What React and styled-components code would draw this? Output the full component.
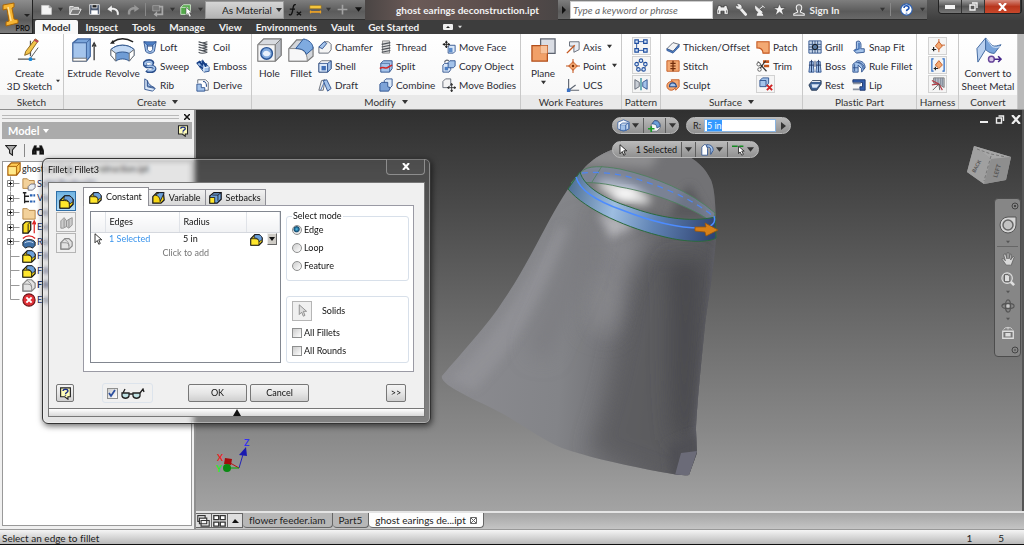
import React, { useEffect, useRef } from 'react'
import styled, { createGlobalStyle, css } from 'styled-components'

const GlobalStyle = createGlobalStyle`
  * {
    box-sizing: border-box;
  }
  body {
    margin: 0;
    font-family: Lato, 'Open Sans', sans-serif;
    font-size: 10px;
    line-height: 14px;
    font-variant-ligatures: none;
    color: #222;
    background: #111;
  }
  button,
  input,
  select {
    font: inherit;
    color: inherit;
    margin: 0;
  }
  svg {
    display: block;
    flex: none;
  }
`

/* ---------- icons ---------- */

const NAVY = '#2b4f8c'
const SKY = '#a4c3ea'
const PALE = '#dbe8f8'
const GREY = '#5d6470'
const RUST = '#c4571f'
const PEACH = '#f3a973'

const glyphs = {
  page: <path d="M2 3h9l3 3v8H2z M11 3v3h3" fill="#f4f4f4" stroke="#ccc" />,
  open: (
    <>
      <path d="M2 13V4h4l1 1h5v3" fill="#aaa" stroke="#eee" />
      <path d="M2 13l3-6h10l-3 6z" fill="#777" stroke="#f4f4f4" />
    </>
  ),
  save: (
    <>
      <path d="M2 2h12v12H2z" fill="#4a5870" stroke="#e8e8e8" />
      <path d="M5 2h6v4H5z" fill="#222" stroke="#eee" />
      <path d="M4 9h8v5H4z" fill="#fff" />
    </>
  ),
  undo: <path d="M1 7l6-5v3c5 0 8 3 8 7v2h-3v-2c0-3-2-4-5-4v3z" fill="#f0f0f0" stroke="#333" strokeWidth=".5" />,
  redo: <path d="M15 7L9 2v3c-5 0-8 3-8 7v2h3v-2c0-3 2-4 5-4v3z" fill="#979797" />,
  update: (
    <>
      <path d="M2 3h8v6H2z" fill="#777" stroke="#9b9b9b" />
      <path d="M9 4h4v9H6" fill="none" stroke="#a8a8a8" strokeWidth="2" />
      <path d="M3 13l4-4v7z" fill="#aaa" />
    </>
  ),
  pick: (
    <>
      <path d="M2 5l3-3h8v8l-3 3H2z" fill="#54a84b" stroke="#d8ecd5" />
      <path d="M2 5h8v8" fill="none" stroke="#cbe7c7" />
      <path d="M8 5v9l2-2 2 4 2-1-2-4h3z" fill="#fff" stroke="#444" strokeWidth=".6" />
    </>
  ),
  ruler: (
    <>
      <path d="M1 3h14v4H1z" fill="#f3c53d" stroke="#8a6514" strokeWidth=".6" />
      <path d="M1 11h14" stroke="#f5a623" strokeWidth="2" />
      <path d="M2 9v4M14 9v4" stroke="#f5a623" />
    </>
  ),
  plus: <path d="M8 2v12M2 8h12" stroke="#a2a2a2" strokeWidth="2" />,
  binoculars: (
    <path
      d="M3 3h3v2h4V3h3l2 6v5h-5v-4H6v4H1V9z M3 9v3 M13 9v3"
      fill="#eee"
      stroke="#222"
      strokeWidth=".7"
    />
  ),
  findTree: <path d="M3 2h3v3h4V2h3l3 7v5h-6v-5H6v5H0V9z M3 9v3M13 9v3" fill="#111" stroke="#555" strokeWidth=".6" />,
  key: (
    <>
      <path d="M6 6l7 8" stroke="#eee" strokeWidth="3.5" strokeLinecap="round" />
      <path d="M2 1c4-1 8 2 6 6-3 2-8 0-7-4l3 1z" fill="#eee" stroke="#333" strokeWidth=".5" />
    </>
  ),
  dish: (
    <path
      d="M2 3c0 6 4 9 9 8zM7 7l5-4M6 11l-2 4h8l-3-4M11 2l3 3"
      fill="#eee"
      stroke="#eee"
      strokeWidth="1.3"
    />
  ),
  star: <path d="M8 1l2 5h5l-4 3 2 6-5-4-5 4 2-6-4-3h5z" fill="#f5f5f5" stroke="#333" strokeWidth=".5" />,
  person: (
    <path d="M8 1c5 0 4 7 2 8v2l5 2v2H1v-2l5-2V9C4 8 3 1 8 1z" fill="#777" stroke="#f0f0f0" strokeWidth="1.4" />
  ),
  loft: (
    <>
      <path d="M1 2l4 1v5c0 2 6 2 6 0V3l4-1-2 11c-3 3-7 3-10 0z" fill={SKY} stroke={NAVY} />
      <path d="M1 2h14l-4 4H5z" fill="#4d7fc5" stroke={NAVY} strokeWidth=".8" />
      <path d="M5 7h6v4c-2 3-4 3-6 0z" fill="#fff" stroke={NAVY} />
    </>
  ),
  sweep: (
    <>
      <path d="M3 8c-3-3 0-6 4-6 3 0 5 2 3 4M3 8c3 2 8-1 10 2 2 4-6 6-9 3" fill="none" stroke={NAVY} strokeWidth="4" />
      <path d="M3 7c-2-3 1-4 4-4 3 0 4 2 2 3M4 8c3 1 7-1 9 2 1 3-5 4-8 3" fill="none" stroke={SKY} strokeWidth="2" />
    </>
  ),
  rib: (
    <>
      <path d="M2 1l3 2v7l9 2-3 3-9-2z" fill={PALE} stroke={NAVY} />
      <path d="M5 3c1 4 4 6 8 8l-8-2z" fill={SKY} stroke={NAVY} />
    </>
  ),
  coil: (
    <path
      d="M3 2c3 2 7 1 10 0M3 5c3 2 7 1 10 0M3 8c3 2 7 1 10 0M3 11c3 2 7 1 10 0M3 14c3 2 7 1 10 0M3 2l10 3M3 5l10 3M3 8l10 3M3 11l10 3"
      fill="none"
      stroke="#4d5258"
      strokeWidth="1.3"
    />
  ),
  emboss: (
    <>
      <path d="M1 5l6-3 8 7v5l-6 1z" fill={SKY} stroke={NAVY} />
      <path d="M1 5l3-2 3 4 1-4 3 5 1-3M4 8l4 3" stroke="#173f86" strokeWidth="2" fill="none" />
      <path d="M9 15v-5l6-1" fill="none" stroke="#fff" />
    </>
  ),
  derive: (
    <>
      <path d="M2 6V2h9l3 3v9h-4" fill="#fff" stroke={GREY} />
      <path d="M1 7h5v4h4v4H1z" fill={SKY} stroke={NAVY} />
      <path d="M8 4c4 0 4 3 4 6" fill="none" stroke={NAVY} strokeWidth="1.3" />
    </>
  ),
  chamfer: (
    <>
      <path d="M1 8l6-6h5l3 3v6l-3 4H1z" fill="#f4f4f4" stroke={GREY} />
      <path d="M1 8l6-6 3 2-5 6z" fill={SKY} stroke={NAVY} />
    </>
  ),
  shell: (
    <>
      <path d="M1 5l3-3h11v9l-4 4H1z" fill="#fff" stroke={GREY} />
      <path d="M1 5h10v10H1z" fill={PALE} stroke={NAVY} />
      <path d="M4 8h5v5H4z" fill="#3e6db5" />
      <path d="M11 5l4-3v9l-4 4z" fill={SKY} stroke={NAVY} />
    </>
  ),
  draft: (
    <>
      <path d="M1 14L4 3l4-1-2 12z" fill="#eee" stroke={GREY} />
      <path d="M6 3l4-1 5 10-4 3z" fill={SKY} stroke={NAVY} />
      <path d="M3 14L7 5" stroke="#3e6db5" />
    </>
  ),
  thread: (
    <>
      <path d="M4 1h8v14H4z" fill="#ddd" stroke="#888" />
      <path d="M3 5l10-2M3 8l10-2M3 11l10-2M3 14l10-2" stroke="#4d5258" strokeWidth="1.4" />
    </>
  ),
  split: (
    <>
      <path d="M2 5l3-3h10v9l-3 4H2z" fill={SKY} stroke={NAVY} />
      <path d="M2 5h10v10" fill="none" stroke={NAVY} strokeWidth=".7" />
      <path d="M1 11c4-4 6 2 10-2l4-2" fill="none" stroke="#d32727" strokeWidth="1.8" />
    </>
  ),
  combine: (
    <>
      <path d="M6 3l2-2h7v8l-2 2H6z" fill={PALE} stroke={NAVY} />
      <path d="M1 7l2-2h7v5l3 1-2 4H1z" fill="#7da3d8" stroke={NAVY} />
    </>
  ),
  moveFace: (
    <>
      <path d="M5 1v8M1 5h8M5 1L4 3h2zM5 9L4 7h2zM1 5l2-1v2zM9 5L7 4v2z" stroke="#222" fill="#222" />
      <path d="M7 8l2-2h6v7l-2 2H7z" fill={PALE} stroke={NAVY} />
      <path d="M8 9h4v5H8z" fill="#5c8ccc" />
    </>
  ),
  copyObject: (
    <>
      <path d="M1 7l2-2h7v7l-2 3H1z" fill={PALE} stroke={NAVY} />
      <path d="M7 4l2-2h6v6l-2 2H7z" fill={SKY} stroke={NAVY} />
      <path d="M3 4c0-3 3-3 5-2" fill="none" stroke={GREY} strokeWidth="1.4" />
      <path d="M3 9h4v4H3z" fill="#4d7fc5" />
    </>
  ),
  moveBodies: (
    <>
      <path d="M1 4l3-3h6v7l-3 3H1z" fill="#f4f4f4" stroke={GREY} />
      <path d="M11 7v8M7 11h8M11 6l-1 2h2zM11 16l-1-2h2zM6 11l2-1v2zM16 11l-2-1v2z" stroke="#333" fill="#333" />
    </>
  ),
  axis: (
    <>
      <path d="M4 2h11v9L9 14V7H4z" fill="#e8ecf2" stroke={GREY} />
      <path d="M1 15L10 6" stroke={RUST} strokeWidth="1.6" />
    </>
  ),
  point: (
    <>
      <path d="M8 3l5 5-5 5-5-5z" fill={PEACH} stroke={RUST} />
      <path d="M8 0v5M8 11v5M0 8h5M11 8h5" stroke={RUST} strokeWidth="1.2" />
      <circle cx="8" cy="8" r="1.4" fill="#7a2e08" />
    </>
  ),
  ucs: (
    <>
      <path d="M3 1v13h12M3 14l8-6" fill="none" stroke={GREY} strokeWidth="1.3" />
      <path d="M1 12h4v4H1z" fill="#3b71c4" />
    </>
  ),
  rect: (
    <>
      <path d="M5 3h6M5 13h6M3 5v6" fill="none" stroke="#1e4d9f" />
      <path d="M1 1h4v4H1zM11 1h4v4h-4zM1 11h4v4H1zM11 11h4v4h-4z" fill={PALE} stroke="#1e4d9f" strokeWidth="1.3" />
    </>
  ),
  circ: (
    <g fill={PALE} stroke="#1e4d9f" strokeWidth="1.2">
      <circle cx="8" cy="9" r="5" fill="none" stroke="#888" />
      <circle cx="8" cy="3" r="2" />
      <circle cx="13" cy="7" r="2" />
      <circle cx="11" cy="13" r="2" />
      <circle cx="5" cy="13" r="2" />
      <circle cx="3" cy="7" r="2" />
    </g>
  ),
  mirror: (
    <>
      <path d="M1 3l5 3v5l-5 3z" fill="#c9ced6" stroke={GREY} />
      <path d="M15 3l-5 3v5l5 3z" fill={SKY} stroke={NAVY} />
      <path d="M8 1v14" stroke="#2d8f9b" strokeWidth="1.5" />
    </>
  ),
  thicken: (
    <>
      <path d="M1 10l7-7 7 2-7 8z" fill="#f4f4f4" stroke={GREY} />
      <path d="M1 10l7 3 7-8v3l-7 7-7-3z" fill="#4d7fc5" stroke={NAVY} strokeWidth=".8" />
    </>
  ),
  stitch: (
    <>
      <path d="M1 2h14v12H1z" fill={PEACH} stroke={RUST} />
      <path d="M8 2v12M5 5h6M5 8h6M5 11h6" stroke="#702b0b" strokeWidth="1.4" />
    </>
  ),
  sculpt: (
    <>
      <path d="M6 2h9v8l-4 4z" fill={PEACH} stroke={RUST} />
      <circle cx="6" cy="9" r="5" fill={PEACH} stroke={RUST} />
      <path d="M4 10c0-6 7-6 8 0z" fill={SKY} stroke={NAVY} strokeWidth="1.3" />
    </>
  ),
  patch: <path d="M1 2h14v13H8c0-4-2-6-7-6z" fill={PEACH} stroke={RUST} strokeWidth="1.2" />,
  trim: (
    <>
      <path d="M8 3h7M9 8h6" stroke={RUST} strokeWidth="3" />
      <path d="M2 3l10 11M3 13L11 2" stroke="#333" strokeWidth="1.4" />
      <circle cx="3" cy="6" r="2" fill="#fff" stroke="#555" />
      <circle cx="4" cy="12" r="2" fill="#fff" stroke="#555" />
    </>
  ),
  deleteFace: (
    <>
      <path d="M1 4l3-3h7v6l-3 4H1z" fill={SKY} stroke={NAVY} />
      <path d="M1 4h7v7" fill="none" stroke={NAVY} />
      <path d="M9 9l6 6M15 9l-6 6" stroke="#cf2222" strokeWidth="2.2" />
    </>
  ),
  grill: (
    <>
      <path d="M1 1h14v14H1z" fill="#c9d7ea" stroke={NAVY} />
      <path d="M1 5h14M1 8h14M1 11h14M5 1v14M8 1v14M11 1v14" stroke="#33517f" />
      <circle cx="8" cy="8" r="3" fill="#58789f" stroke="#111" />
    </>
  ),
  boss: (
    <>
      <path d="M2 3h4v4l1 8H1l1-8zM10 3h4v4l1 8H9l1-8z" fill={SKY} stroke={NAVY} />
      <path d="M1 7h6M9 7h6M4 1v14M12 1v14M8 2v7" stroke="#1e345f" />
    </>
  ),
  rest: (
    <>
      <path d="M1 8l4-5h10v4l-5 7H4z" fill="#3e6397" stroke="#24364f" />
      <path d="M4 7h9l-3 4H5z" fill={PALE} />
      <path d="M4 4h10" stroke="#fff" />
    </>
  ),
  snapFit: (
    <>
      <path d="M5 2c5-3 6 3 5 8h4v4l-9 1-3-3 3-2V7z" fill={SKY} stroke={NAVY} />
      <path d="M8 3v7l-5 2" fill="none" stroke="#3868af" strokeWidth="1.5" />
    </>
  ),
  ruleFillet: (
    <>
      <path d="M1 6l5-4c6 0 9 3 9 8l-4 5V11L7 7v8H1z" fill={SKY} stroke={NAVY} />
      <path d="M3 6v8M7 4c4 0 7 3 7 7M5 4c5 0 7 3 8 8M1 10h6" stroke={NAVY} fill="none" />
    </>
  ),
  lip: (
    <>
      <path d="M1 2h14v12H9v-4h3V5H1z" fill="#3560ad" stroke="#173066" />
      <path d="M1 6h9M1 13h7" stroke="#8b93a1" strokeWidth="2" />
    </>
  ),
  pin: (
    <>
      <path d="M9 3l4 5-4 4-4-4z" fill={PEACH} stroke={RUST} />
      <path d="M9 0v4M9 11v4M12 7h4" stroke={RUST} />
      <path d="M1 12h5M3 9v5" stroke="#222" strokeWidth="1.4" />
    </>
  ),
  pins: (
    <>
      <path d="M3 1H1v14h2M13 1h2v14h-2" fill="none" stroke="#2b6bc4" strokeWidth="1.4" />
      <path d="M9 3l4 5-4 4-4-4z" fill={PEACH} stroke={RUST} />
      <path d="M3 12h5M5 10v4" stroke="#222" strokeWidth="1.3" />
    </>
  ),
  harness: (
    <>
      <path d="M3 1h12v11l-5-3-7-2z" fill="#b8bec8" stroke="#777" />
      <path d="M5 1v6M8 1v7M11 1v8M13 1v9" stroke="#7b8594" />
      <path d="M1 4l8 4 4 7M9 8L1 9" stroke="#b23b45" strokeWidth="1.3" fill="none" />
      <path d="M2 15L9 8l1 7" stroke="#555" fill="none" />
    </>
  ),
  help: (
    <>
      <circle cx="8" cy="8" r="7" fill="#fff" stroke="#2d5fae" strokeWidth="1.4" />
      <path d="M5 6c0-4 6-3 6 0 0 2-3 2-3 4M8 12v1" fill="none" stroke="#1f55b4" strokeWidth="2" />
    </>
  ),
  helpBox: (
    <>
      <path d="M2 1h12v11h-3v3l-4-3H2z" fill="#fffdb8" stroke="#222" strokeWidth="1.4" />
      <path d="M5 5c0-3 6-3 6 0 0 2-3 1-3 4M8 10v1" fill="none" stroke="#1a2d86" strokeWidth="1.7" />
    </>
  ),
  funnel: <path d="M1 2h14l-5 6v7l-4-3V8z" fill="#aaa" stroke="#222" strokeWidth="1.4" />,
  part: (
    <>
      <path d="M1 5l4-4h10v9l-4 5H1z" fill="#fc5" stroke="#a35b05" strokeWidth="1.3" />
      <path d="M1 5h10v10M11 5l4-4" fill="none" stroke="#a35b05" />
      <path d="M2 6h8v8H2z" fill="#ffe98b" />
    </>
  ),
  folder: <path d="M1 3h5l2 2h7v10H1z" fill="#f3d19a" stroke="#b07f3c" />,
  solids: (
    <>
      <path d="M1 2h5l2 2h6v9H1z" fill="#f3d19a" stroke="#b07f3c" />
      <path d="M7 11l3-3h5v4l-3 3H7z" fill="#e9edf3" stroke="#667" />
    </>
  ),
  views: (
    <>
      <path d="M3 2v12M3 6h5M3 12h5M1 2h4" stroke="#222" strokeWidth="1.5" />
      <path d="M9 5h6M9 12h6" stroke="#2b63b4" strokeWidth="2.5" strokeDasharray="3 1" />
    </>
  ),
  extrudeTree: (
    <>
      <path d="M1 5l3-3h6v9l-3 4H1z" fill="#f9dc26" stroke="#111" strokeWidth="1.4" />
      <path d="M7 5v10M7 5l3-3" stroke="#111" />
      <path d="M14 3v12M12 5l2-4 2 4" stroke="#d22" fill="none" strokeWidth="1.4" />
    </>
  ),
  revolveTree: (
    <>
      <path d="M1 8c3-4 11-4 14 0v4l-3 3c-2-2-6-2-8 0l-3-3z" fill="#3e6fa5" stroke="#111" />
      <path d="M3 9c3-2 7-2 10 0" stroke={PALE} fill="none" />
      <path d="M1 4c4-4 10-4 14 0" stroke="#d22" strokeWidth="1.6" fill="none" />
    </>
  ),
  fillet: (
    <>
      <path d="M1 7l5-5h5l4 4v5l-4 4H1z" fill="#f7d715" stroke="#15151a" strokeWidth="1.4" />
      <path d="M6 2h5c3 1 4 3 4 6l-4 3c0-4-3-5-6-5z" fill="#6ca0d9" stroke="#15151a" strokeWidth=".8" />
      <path d="M1 7h5c3 0 5 1 5 4v4H1z" fill="#ffe62b" stroke="#15151a" />
    </>
  ),
  variable: (
    <>
      <path d="M1 7l5-5h8l1 9-4 4H1z" fill="#f7d715" stroke="#15151a" strokeWidth="1.5" />
      <path d="M4 5l5-3h6l-5 11c0-5-2-7-6-8z" fill="#6ca0d9" stroke="#15151a" />
    </>
  ),
  setbacks: (
    <>
      <path d="M1 6l5-4h9v8l-5 5H1z" fill="#6ca0d9" stroke="#15151a" strokeWidth="1.5" />
      <path d="M1 8h6v7H1z" fill="#ffe62b" stroke="#15151a" />
      <path d="M4 5h7v7M11 5l4-3" fill="none" stroke="#15151a" />
    </>
  ),
  filletGrey: (
    <>
      <path d="M1 7l5-5h5l4 4v5l-4 4H1z" fill="#e2e2e2" stroke="#888" strokeWidth="1.4" />
      <path d="M1 7h5c3 0 5 1 5 4v4H1zM6 2c-1 2 5 2 5 9" fill="none" stroke="#888" />
    </>
  ),
  faceGrey: (
    <>
      <path d="M1 6l4-4 3 4 3-2 4-2v9l-4 4-3-2-4 2H1z" fill="#ccc" stroke="#888" />
      <path d="M5 4v10M8 6v7M11 4v10" stroke="#888" />
    </>
  ),
  end: (
    <>
      <circle cx="8" cy="8" r="7" fill="#e02f35" stroke="#6b1115" strokeWidth="1.2" />
      <path d="M5 5l6 6M11 5l-6 6" stroke="#fff" strokeWidth="2.4" />
    </>
  ),
  cursor: <path d="M4 1v12l3-3 2 5 2-1-2-5h4z" fill="#fff" stroke="#111" strokeWidth="1.1" />,
  cursorGrey: <path d="M4 1v12l3-3 2 5 2-1-2-5h4z" fill="#ddd" stroke="#888" strokeWidth="1.1" />,
  bodyMini: (
    <>
      <path d="M1 4l7-3 7 3v8l-7 3-7-3z" fill="#f8fbff" stroke="#315b9e" />
      <path d="M4 7h7v7H4z" fill={SKY} stroke="#315b9e" />
      <path d="M4 7l3-2h7l-3 2M11 7v7l3-2V5" fill={PALE} stroke="#315b9e" />
    </>
  ),
  addMini: (
    <>
      <path d="M4 7l4-5h4l3 4v5l-4 4H4z" fill="#f5f5f5" stroke={GREY} />
      <path d="M8 2c5 0 6 3 7 7l-4 2c0-4-2-5-6-5z" fill="#6ca0d9" stroke={NAVY} />
      <path d="M4 9v7M0 12h8" stroke="#1a9a27" strokeWidth="2" />
    </>
  ),
  edgesMini: (
    <>
      <path d="M1 5l3-3c3 0 4 2 4 5v8H1z" fill="#fff" stroke={NAVY} />
      <path d="M7 2c6 0 8 3 8 7l-3 5V9c0-3-1-4-5-4z" fill={SKY} stroke={NAVY} />
    </>
  ),
  lineMini: (
    <>
      <path d="M0 4h14" stroke="#148a22" strokeWidth="2" strokeDasharray="7 2" />
      <path d="M8 4v9l2-2 2 4 2-1-2-4h3z" fill="#fff" stroke="#222" />
    </>
  ),
  cascade: (
    <>
      <path d="M1 2h9v7H1z" fill="#fff" stroke="#333" strokeWidth="1.4" />
      <path d="M3 5h9v7H3zM5 8h10v7H5z" fill="#f4f4f4" stroke="#333" strokeWidth="1.4" />
    </>
  ),
  tile: <path d="M1 2h6v5H1zM9 2h6v5H9zM1 10h6v5H1zM9 10h6v5H9z" fill="#fff" stroke="#333" strokeWidth="1.6" />,
}

const Icon = ({ name, size = 14 }) => (
  <svg width={size} height={size} viewBox="0 0 16 16" aria-hidden="true">
    {glyphs[name]}
  </svg>
)

const Caret = ({ color = '#333', size = 6 }) => (
  <svg width={size} height={size} viewBox="0 0 6 6" aria-hidden="true">
    <path d="M0 1h6L3 5z" fill={color} />
  </svg>
)

const bigGlyphs = {
  sketch: (
    <>
      <path d="M2 23h18M15 4v16" stroke="#555" strokeWidth="1.3" />
      <path d="M15 22l8-11" stroke="#555" />
      <path d="M10 15L20 2l3 2-9 13-5 2z" fill="#f2c44a" stroke="#8a641c" />
      <path d="M19 3l4 2" stroke="#b45" strokeWidth="2" />
      <circle cx="15" cy="23" r="2" fill="#1686d9" />
    </>
  ),
  extrude: (
    <>
      <path d="M2 6l5-4h13v18l-4 5H2z" fill="#79a4da" stroke="#3c629c" strokeWidth="1.2" />
      <path d="M2 6h14v17H2z" fill="#a5c5ec" stroke="#3c629c" />
      <path d="M16 6l4-4" stroke="#3c629c" />
      <path d="M2 22h14v3H2z" fill="#fff" stroke="#777" />
      <path d="M24 24V8M22 10l2-4 2 4" stroke="#333" fill="none" strokeWidth="1.3" />
    </>
  ),
  revolve: (
    <>
      <path d="M4 5c6-4 14-4 21 0" stroke="#222" fill="none" strokeWidth="1.5" />
      <path d="M1 7l3-4 2 4z" fill="#222" />
      <path d="M2 13c6-6 18-6 24 0v6l-5 6c-4-3-10-3-14 0l-5-6z" fill="#6f9cd5" stroke="#31568d" />
      <path d="M2 13c6-6 18-6 24 0l-5 4c-4-2-10-2-14 0z" fill="#c3d9f4" stroke="#31568d" />
      <path d="M2 13l5 4v8l-5-6zM26 13l-5 4v8l5-6z" fill="#fff" stroke="#777" />
    </>
  ),
  hole: (
    <>
      <path d="M2 8l6-6h18v17l-6 6H2z" fill="#d8dbe0" stroke="#777" strokeWidth="1.2" />
      <path d="M2 8h18v17H2z" fill="#f5f5f6" stroke="#888" />
      <path d="M20 8l6-6v17l-6 6z" fill="#babfc8" stroke="#777" />
      <circle cx="11" cy="17" r="6" fill="#84acdf" stroke="#2a5596" strokeWidth="1.5" />
      <path d="M7 17c1 4 7 4 8 0-2-3-6-4-8 0z" fill="#eaf2fc" />
    </>
  ),
  fillet: (
    <>
      <path d="M1 12l8-9h8l9 8v9l-6 5H1z" fill="#d3d6db" stroke="#777" strokeWidth="1.2" />
      <path d="M1 12h7c7 0 12 3 12 13H1z" fill="#f7f7f8" stroke="#888" />
      <path d="M8 12l8-10c6 1 10 5 10 10l-7 6c-1-4-5-6-11-6z" fill="#7fabe0" stroke="#2a5596" />
    </>
  ),
  plane: (
    <>
      <path d="M11 2h15v15H11z" fill="#dadde4" stroke="#5d6470" strokeWidth="1.3" />
      <path d="M2 9h16v16H2z" fill="#ee8f4e" fillOpacity=".85" stroke="#b24d19" strokeWidth="1.3" />
      <path d="M11 9h7v8h-7z" fill="#f7c29b" />
    </>
  ),
  convert: (
    <>
      <path d="M2 12l9-11v12L3 26z" fill="#b9d0ef" stroke="#41689f" />
      <path d="M11 1l7 8c3 1 5 0 9-1l-7 9c-3 0-6-1-9-4z" fill="#79a4da" stroke="#41689f" />
      <path d="M12 2l6 8c3 1 5 1 8 0" fill="none" stroke="#dbe8f8" />
      <circle cx="17" cy="23" r="3" fill="#d7c6e8" stroke="#67459a" strokeWidth="1.5" />
      <path d="M20 23h6M24 20l3 3-3 3" stroke="#45268a" strokeWidth="1.6" fill="none" />
    </>
  ),
}

/* ---------- title bar + tabs ---------- */

const Page = styled.div`
  height: 100vh;
  min-height: 480px;
  display: flex;
  flex-direction: column;
  border-bottom: 1px solid #111;
  overflow: hidden;
`

const Header = styled.header`
  flex: none;
  display: grid;
  grid-template: 20px 14px / 33px 1fr;
  background: #3d3d3d;
`

const AppButton = styled.button`
  grid-row: 1 / 3;
  position: relative;
  display: flex;
  padding: 2px 0 0 2px;
  border: 1px solid #222;
  border-width: 0 1px 1px 0;
  background: linear-gradient(#8d8d8d, #5a5a5a 60%, #7d7d7d);
`

const AppLabel = styled.span`
  position: absolute;
  right: 2px;
  bottom: 0;
  font-size: 7px;
  line-height: 9px;
  font-weight: 700;
  color: #111;
`

const TitleBar = styled.div`
  display: flex;
  min-width: 0;
  background: linear-gradient(#5a5a5a, #3f3f3f);
`

const Strip = styled.div`
  display: flex;
  align-items: center;
  border-bottom: 1px solid #2e2e2e;
  background: linear-gradient(#7e7e7e, #5b5b5b 60%, #686868);
  padding-left: ${p => p.$pad || 0}px;
`

const Tool = styled.button`
  flex: none;
  display: flex;
  align-items: center;
  justify-content: center;
  width: ${p => p.$w}px;
  height: 18px;
  padding: 0;
  border: 0;
  font-weight: ${p => (p.$bold ? 700 : 400)};
  background: none;
  color: #eee;
`

const Gap = styled.span`
  width: ${p => p.$w}px;
`

const Divider = styled.i`
  width: 1px;
  height: 13px;
  margin: 0 ${p => p.$gap || 2}px;
  background: #888;
`

const Material = styled.label`
  position: relative;
  display: flex;
  align-items: center;

  select {
    appearance: none;
    width: 79px;
    height: 18px;
    padding: 0 10px 0 16px;
    border: 1px solid #999;
    border-radius: 0;
    background: linear-gradient(#d5d5d5, #b3b3b3);
    color: #222;
  }
  svg {
    position: absolute;
    right: 2px;
    pointer-events: none;
  }
`

const FileTitle = styled.h1`
  flex: 1 1 100px;
  display: flex;
  align-items: center;
  justify-content: center;
  min-width: 150px;
  margin: 0;
  padding-left: 12px;
  font-size: 10px;
  font-weight: 700;
  white-space: nowrap;
  color: #f2f2f2;
  background: linear-gradient(90deg, #4a4544, #6b5a57 25%, #574b49 75%, #4a4646);
`

const Search = styled.input`
  width: 143px;
  height: 18px;
  margin-top: 1px;
  padding: 0 2px;
  border: 1px solid #ccc;
  background: #fff;
  font-style: italic;

  &::placeholder {
    color: #666;
  }
`

const WindowButtons = styled.div`
  flex: none;
  display: flex;
  height: 14px;
  margin: 0 2px 0 11px;
  border: 1px solid #222;
  border-top: 0;
  border-radius: 0 0 4px 4px;
  overflow: hidden;
`

const WindowButton = styled.button`
  display: flex;
  align-items: center;
  justify-content: center;
  width: ${p => (p.$close ? 36 : 23)}px;
  padding: 0;
  border: 0;
  border-right: 1px solid #333;
  background: ${p =>
    p.$close
      ? 'linear-gradient(#d58a7c, #b8361d 50%, #c9482b)'
      : 'linear-gradient(#9b9b9b, #555 50%, #777)'};
`

const Tabs = styled.nav`
  display: flex;
  padding-left: 2px;
  background: #3d3d3d;
`

const Tab = styled.button`
  padding: 0 7px;
  border: 0;
  font-weight: 700;
  line-height: 13px;
  white-space: nowrap;
  background: none;
  color: #f2f2f2;

  ${p =>
    p.$active &&
    css`
      margin-right: 1px;
      border-radius: 2px 2px 0 0;
      background: #f9f9f9;
      color: #333;
    `}
`

const RibbonToggle = styled.button`
  display: flex;
  align-items: center;
  gap: 5px;
  margin-left: 17px;
  padding: 0;
  border: 0;
  background: none;
`

function TitleTools() {
  return (
    <TitleBar>
      <Strip $pad={4}>
        <Tool $w={18} aria-label="New"><Icon name="page" size={13} /></Tool>
        <Tool $w={10} aria-label="New options"><Caret color="#333" size={5} /></Tool>
        <Tool $w={20} aria-label="Open"><Icon name="open" /></Tool>
        <Tool $w={18} aria-label="Save"><Icon name="save" size={13} /></Tool>
        <Tool $w={20} aria-label="Undo"><Icon name="undo" /></Tool>
        <Tool $w={20} aria-label="Redo"><Icon name="redo" size={13} /></Tool>
        <Divider />
        <Tool $w={19} aria-label="Update"><Icon name="update" /></Tool>
        <Tool $w={10} aria-label="Update options"><Caret color="#333" size={5} /></Tool>
        <Tool $w={18} aria-label="Select"><Icon name="pick" /></Tool>
        <Tool $w={10} aria-label="Select options"><Caret color="#333" size={5} /></Tool>
        <Material>
          <select aria-label="Colour">
            <option>As Material</option>
          </select>
          <Caret />
        </Material>
        <Tool $w={22} aria-label="Parameters">
          <svg width="14" height="14" viewBox="0 0 16 16">
            <path d="M9 2c-3-1-3 3-4 8-1 4-2 4-4 3M2 7h6M10 10l5 4M15 10l-5 4" stroke="#111" fill="none" strokeWidth="1.5" />
          </svg>
        </Tool>
        <Tool $w={18} aria-label="Measure"><Icon name="ruler" size={13} /></Tool>
        <Tool $w={8} aria-label="Measure options"><Caret color="#333" size={5} /></Tool>
        <Tool $w={20} aria-label="Add"><Icon name="plus" size={13} /></Tool>
        <Tool $w={13} aria-label="Customize"><Caret color="#111" size={7} /></Tool>
      </Strip>
      <FileTitle>ghost earings deconstruction.ipt</FileTitle>
      <Strip>
        <Tool $w={12} aria-label="Expand search">
          <svg width="6" height="8" viewBox="0 0 6 8"><path d="M1 0l4 4-4 4z" fill="#111" /></svg>
        </Tool>
        <Search placeholder="Type a keyword or phrase" aria-label="Search help" />
        <Tool $w={19} aria-label="Search"><Icon name="binoculars" size={13} /></Tool>
        <Tool $w={19} aria-label="Subscription"><Icon name="key" size={13} /></Tool>
        <Tool $w={18} aria-label="Communication"><Icon name="dish" size={12} /></Tool>
        <Tool $w={20} aria-label="Favorites"><Icon name="star" size={13} /></Tool>
        <Tool $w={20} aria-label="Account"><Icon name="person" size={12} /></Tool>
        <Tool $w={31} $bold>Sign&nbsp;In</Tool>
        <Gap $w={37} />
        <Tool $w={10} aria-label="Sign in options"><Caret color="#333" size={5} /></Tool>
        <Divider $gap={3} />
        <Tool $w={24} aria-label="Help"><Icon name="help" size={13} /></Tool>
        <Tool $w={9} aria-label="Help options"><Caret color="#333" size={5} /></Tool>
      </Strip>
      <WindowButtons>
        <WindowButton aria-label="Minimize">
          <svg width="10" height="4"><path d="M0 0h10v4H0z" fill="#f4f4f4" /></svg>
        </WindowButton>
        <WindowButton aria-label="Restore">
          <svg width="9" height="9" viewBox="0 0 9 9"><path d="M3 1h5v5M1 3h5v5H1z" fill="none" stroke="#f4f4f4" strokeWidth="1.4" /></svg>
        </WindowButton>
        <WindowButton $close aria-label="Close">
          <svg width="9" height="8" viewBox="0 0 9 8"><path d="M1 0l7 8M8 0L1 8" stroke="#fff" strokeWidth="2.2" /></svg>
        </WindowButton>
      </WindowButtons>
    </TitleBar>
  )
}

/* ---------- ribbon ---------- */

const Ribbon = styled.div`
  flex: none;
  display: flex;
  height: 76px;
  border-bottom: 1px solid #8c8c8c;
  background: #b9b9b9;
`

const Panel = styled.section`
  flex: none;
  display: flex;
  flex-direction: column;
  width: ${p => p.$w}px;
  border-right: 1px solid #c9c9c9;
  background: linear-gradient(#fff, #f6f6f6);
`

const PanelBody = styled.div`
  flex: 1;
  display: flex;
  padding: 3px 0 0 ${p => p.$pad || 0}px;
  justify-content: ${p => (p.$center ? 'center' : 'flex-start')};
`

const PanelTitle = styled.h2`
  display: flex;
  align-items: center;
  justify-content: center;
  gap: 6px;
  height: 14px;
  margin: 0;
  font-size: 10px;
  font-weight: 400;
  white-space: nowrap;
  color: #333;
  background: #e9e9e9;
`

const Column = styled.div`
  display: flex;
  flex-direction: column;
  width: ${p => p.$w}px;
`

const SmallButton = styled.button`
  display: flex;
  align-items: center;
  gap: 3px;
  height: 19px;
  padding: 0;
  border: 0;
  background: none;
  white-space: nowrap;
  color: #2c2c36;
`

const FramedButton = styled.button`
  display: flex;
  align-items: center;
  justify-content: center;
  width: 19px;
  height: 18px;
  margin-bottom: 1px;
  padding: 0;
  border: 1px solid #d2d2d2;
  background: #f5f5f5;
`

const BigButton = styled.button`
  display: flex;
  flex-direction: column;
  align-items: center;
  width: ${p => p.$w}px;
  height: 57px;
  padding: 0;
  border: 0;
  background: none;
  line-height: 13px;
  color: #2c2c36;
  white-space: nowrap;

  span {
    margin-top: 3px;
  }
`

const MenuMark = styled.i`
  margin-left: 3px;
`

const Big = ({ icon, w, menu, children }) => (
  <BigButton $w={w}>
    <svg width="27" height="27" viewBox="0 0 28 28" aria-hidden="true">
      {bigGlyphs[icon]}
    </svg>
    <span>{children}</span>
    {menu && <Caret size={5} />}
  </BigButton>
)

const Items = ({ w, items }) => (
  <Column $w={w}>
    {items.map(([icon, label, menu]) => (
      <SmallButton key={label}>
        <Icon name={icon} />
        {label}
        {menu && <MenuMark><Caret size={5} /></MenuMark>}
      </SmallButton>
    ))}
  </Column>
)

const Framed = ({ icons }) => (
  <Column>
    {icons.map(([icon, label]) => (
      <FramedButton key={icon} aria-label={label}>
        <Icon name={icon} />
      </FramedButton>
    ))}
  </Column>
)

const CaretSlot = styled.div`
  align-self: flex-end;
  padding-bottom: 12px;
`

const Title = ({ menu, children }) => (
  <PanelTitle>
    {children}
    {menu && <Caret />}
  </PanelTitle>
)

function RibbonBar() {
  return (
    <Ribbon>
      <Panel $w={64}>
        <PanelBody $center>
          <Big icon="sketch" w={52}>
            Create
            <br />
            3D Sketch
          </Big>
          <CaretSlot>
            <Caret size={4} />
          </CaretSlot>
        </PanelBody>
        <Title>Sketch</Title>
      </Panel>
      <Panel $w={188}>
        <PanelBody $pad={3}>
          <Big icon="extrude" w={35}>Extrude</Big>
          <Big icon="revolve" w={41}>Revolve</Big>
          <Items w={53} items={[['loft', 'Loft'], ['sweep', 'Sweep'], ['rib', 'Rib']]} />
          <Items w={54} items={[['coil', 'Coil'], ['emboss', 'Emboss'], ['derive', 'Derive']]} />
        </PanelBody>
        <Title menu>Create</Title>
      </Panel>
      <Panel $w={269}>
        <PanelBody $pad={3}>
          <Big icon="hole" w={29}>Hole</Big>
          <Big icon="fillet" w={34}>Fillet</Big>
          <Items w={61} items={[['chamfer', 'Chamfer'], ['shell', 'Shell'], ['draft', 'Draft']]} />
          <Items w={63} items={[['thread', 'Thread'], ['split', 'Split'], ['combine', 'Combine']]} />
          <Items
            w={76}
            items={[['moveFace', 'Move Face'], ['copyObject', 'Copy Object'], ['moveBodies', 'Move Bodies']]}
          />
        </PanelBody>
        <Title menu>Modify</Title>
      </Panel>
      <Panel $w={101}>
        <PanelBody $pad={5}>
          <Big icon="plane" w={34} menu>Plane</Big>
          <Column $w={6} />
          <Items w={54} items={[['axis', 'Axis', true], ['point', 'Point', true], ['ucs', 'UCS']]} />
        </PanelBody>
        <Title>Work Features</Title>
      </Panel>
      <Panel $w={39}>
        <PanelBody $center>
          <Framed icons={[['rect', 'Rectangular pattern'], ['circ', 'Circular pattern'], ['mirror', 'Mirror']]} />
        </PanelBody>
        <Title>Pattern</Title>
      </Panel>
      <Panel $w={142}>
        <PanelBody $pad={5}>
          <Items w={90} items={[['thicken', 'Thicken/Offset'], ['stitch', 'Stitch'], ['sculpt', 'Sculpt']]} />
          <Column>
            <SmallButton><Icon name="patch" />Patch</SmallButton>
            <SmallButton><Icon name="trim" />Trim</SmallButton>
            <FramedButton aria-label="Delete face"><Icon name="deleteFace" /></FramedButton>
          </Column>
        </PanelBody>
        <Title menu>Surface</Title>
      </Panel>
      <Panel $w={114}>
        <PanelBody $pad={5}>
          <Items w={44} items={[['grill', 'Grill'], ['boss', 'Boss'], ['rest', 'Rest']]} />
          <Items w={62} items={[['snapFit', 'Snap Fit'], ['ruleFillet', 'Rule Fillet'], ['lip', 'Lip']]} />
        </PanelBody>
        <Title>Plastic Part</Title>
      </Panel>
      <Panel $w={42}>
        <PanelBody $center>
          <Framed icons={[['pin', 'Place pin'], ['pins', 'Place pin group'], ['harness', 'Harness properties']]} />
        </PanelBody>
        <Title>Harness</Title>
      </Panel>
      <Panel $w={59}>
        <PanelBody $center>
          <Big icon="convert" w={58}>
            Convert to
            <br />
            Sheet Metal
          </Big>
        </PanelBody>
        <Title>Convert</Title>
      </Panel>
    </Ribbon>
  )
}

/* ---------- model browser ---------- */

const Main = styled.main`
  flex: 1;
  display: flex;
  min-height: 0;
`

const Browser = styled.aside`
  flex: none;
  display: flex;
  flex-direction: column;
  width: 196px;
  padding: 2px 2px 3px;
  border-right: 2px solid #8f8f8f;
  background: #f0f0f0;
`

const Grip = styled.div`
  display: flex;
  align-items: center;
  gap: 3px;
  height: 10px;

  i {
    flex: 1;
    height: 4px;
    border: solid #b9b9b9;
    border-width: 1px 0;
  }
  button {
    display: flex;
    padding: 0 2px;
    border: 0;
    background: none;
  }
`

const BrowserHead = styled.div`
  display: flex;
  align-items: center;
  gap: 4px;
  height: 17px;
  padding: 0 3px 0 6px;
  background: #ababab;
  color: #fff;
  font-size: 11px;
  font-weight: 700;

  button {
    display: flex;
    margin-left: auto;
    padding: 0;
    border: 0;
    background: none;
  }
`

const BrowserTools = styled.div`
  display: flex;
  align-items: center;
  gap: 6px;
  height: 22px;
  padding: 0 3px;

  button {
    display: flex;
    padding: 0;
    border: 0;
    background: none;
  }
`

const Tree = styled.ul`
  flex: 1;
  margin: 0;
  padding: 0;
  list-style: none;
  border: 1px solid #999;
  background: #fff;
`

const Node = styled.li`
  display: flex;
  align-items: center;
  gap: 1px;
  height: 14px;
  padding-left: ${p => (p.$root ? 4 : 1)}px;
  font-size: 9px;
  font-weight: ${p => (p.$bold ? 700 : 400)};
  white-space: nowrap;
  color: ${p => (p.$root ? '#222' : '#1d2f63')};

  &:nth-child(even) {
    height: 15px;
  }
`

const Branch = ({ expand, last }) => (
  <svg width="17" height="15" viewBox="0 0 17 15" aria-hidden="true">
    <path d={`M6 0v${last ? 7 : 15}M6 7h9`} transform="translate(.5 .5)" stroke="#999" fill="none" />
    {expand && (
      <>
        <path d="M3.500 4.500h6v6h-6z" fill="#fff" stroke="#888" />
        <path d="M4.500 7.500h4M6.500 5.500v4" stroke="#111" />
      </>
    )}
  </svg>
)

const nodes = [
  ['solids', 'Solid Bodies(1)', true],
  ['views', 'View: Master', true],
  ['folder', 'Origin', true],
  ['extrudeTree', 'Extrusion1', true],
  ['revolveTree', 'Revolution1', true],
  ['fillet', 'Fillet1'],
  ['fillet', 'Fillet2'],
  ['filletGrey', 'Fillet3'],
  ['end', 'End of Part'],
]

function ModelBrowser() {
  return (
    <Browser>
      <Grip>
        <i />
        <button aria-label="Close browser">
          <svg width="6" height="6" viewBox="0 0 6 6"><path d="M0 0l6 6M6 0L0 6" stroke="#111" strokeWidth="1.5" /></svg>
        </button>
      </Grip>
      <BrowserHead>
        Model
        <Caret color="#fff" />
        <button aria-label="Browser help"><Icon name="helpBox" size={12} /></button>
      </BrowserHead>
      <BrowserTools>
        <button aria-label="Filter"><Icon name="funnel" size={12} /></button>
        <Divider $gap={1} />
        <button aria-label="Find"><Icon name="findTree" size={12} /></button>
      </BrowserTools>
      <Tree>
        <Node $root>
          <Icon name="part" />
          ghost earings deconstruction.ipt
        </Node>
        {nodes.map(([icon, label, expand], i) => (
          <Node key={label} $bold={label === 'Fillet3'}>
            <Branch expand={expand} last={i === nodes.length - 1} />
            <Icon name={icon} />
            {label}
          </Node>
        ))}
      </Tree>
    </Browser>
  )
}

/* ---------- graphics window ---------- */

const Stage = styled.div`
  flex: 1;
  display: flex;
  flex-direction: column;
  min-width: 0;
`

const Viewport = styled.div`
  flex: 1;
  position: relative;
  min-height: 0;
  border-right: 2px solid #555;
  background: linear-gradient(#303030, #4b4b4b 25%, #676767 50%, #888 80%, #a3a3a3);
`

const Scene = styled.svg`
  position: absolute;
  width: 100%;
  height: 100%;
`

const BODY =
  'M581 172C592 158 612 145 640 145C672 145 700 156 711 180C715 190 716 208 716 238C714 268 708 300 705 325C701 365 697 405 696 430L697 453L689 475C680 476 668 473 650 470C615 463 585 456 562 448C545 441 525 427 505 415C485 404 462 395 448 385C443 381 441 378 442 376C460 355 490 322 503 301C530 262 547 220 568 189Z'
const FRONT =
  'M580 172C584 187 605 199 630 207C657 217 690 223 715 217L716 238C708 243 685 242 665 237C630 229 585 210 568 189Z'
const BACK = 'M581 172C588 165 602 166 620 169C655 177 690 191 715 213L714 221L709 220C690 207 655 193 620 187C600 182 585 182 571 183Z'

function Model() {
  return (
    <Scene viewBox="196 110 826 401">
      <defs>
        <clipPath id="body"><path d={BODY} /></clipPath>
        <filter id="soft" x="-50%" y="-50%" width="200%" height="200%"><feGaussianBlur stdDeviation="5" /></filter>
        <filter id="wide" x="-80%" y="-50%" width="260%" height="200%"><feGaussianBlur stdDeviation="11" /></filter>
        <linearGradient id="skin" x1="442" x2="716" y1="300" y2="320" gradientUnits="userSpaceOnUse">
          <stop offset="0" stopColor="#8c8c91" />
          <stop offset=".45" stopColor="#838488" />
          <stop offset=".65" stopColor="#707074" />
          <stop offset="1" stopColor="#545458" />
        </linearGradient>
        <linearGradient id="band" x1="568" x2="716" y1="190" y2="225" gradientUnits="userSpaceOnUse">
          <stop offset="0" stopColor="#4f7095" />
          <stop offset=".32" stopColor="#9dbde0" />
          <stop offset=".6" stopColor="#6083b4" />
          <stop offset="1" stopColor="#2f4372" />
        </linearGradient>
      </defs>
      <path d={BODY} fill="url(#skin)" />
      <g clipPath="url(#body)">
        <path d="M560 130h160v90c-50 0-110-10-145-45z" fill="#727275" filter="url(#soft)" />
        <path d="M590 150c20-4 50-2 70 4l-10 14-70-4z" fill="#8e8e90" filter="url(#soft)" />
        <path d="M635 250c-8 60-25 150-45 200l110 40 15-240z" fill="#5a5a5d" opacity=".8" filter="url(#wide)" />
        <path d="M665 260c10 50 0 90 10 180l20 0 6-120 4-60z" fill="#4a4a4d" filter="url(#wide)" />
        <path d="M720 225l-24 215 10 10 24-225z" fill="#6c6c78" filter="url(#soft)" />
        <path d="M600 215c2 30 5 60-5 100l12 20 18-50 25-50z" fill="#939397" opacity=".6" filter="url(#wide)" />
        <path d="M597 212l13 26 26-12-18-10z" fill="#b9b9be" opacity=".9" filter="url(#soft)" />
        <path d="M592 262c-4 30-10 55-6 68l28 8 8-40z" fill="#8d8d91" opacity=".5" filter="url(#wide)" />
        <path d="M560 225c-30 45-45 90-110 155l24 10c40-40 70-90 95-160z" fill="#94949a" opacity=".7" filter="url(#soft)" />
        <path d="M588 225c-8 40-30 80-50 130" stroke="#7b7c80" strokeWidth="20" fill="none" filter="url(#wide)" />
        <ellipse cx="624" cy="192" rx="28" ry="9" fill="#dcdcdc" filter="url(#soft)" transform="rotate(20 624 192)" />
        <ellipse cx="625" cy="194" rx="12" ry="5" fill="#fff" filter="url(#soft)" />
        <path d="M690 185c-10 10-20 25-20 35h40z" fill="#58585c" filter="url(#soft)" />
        <path d="M668 445l30-12v25l-12 22h-14z" fill="#4f4f54" filter="url(#soft)" />
        <path d="M681 453l16-2-8 26-14-2z" fill="#6b6b78" />
      </g>
      <path d={BACK} fill="#8496bb" fillOpacity=".45" stroke="#4e805c" strokeWidth=".9" />
      <path d="M602 166l-10 16" stroke="#4e805c" strokeWidth=".8" />
      <path d={FRONT} fill="url(#band)" stroke="#2a6a3c" />
      <path d="M576 177C580 192 602 203 622 210C650 221 680 229 705 228C713 226 716 222 714 216" fill="none" stroke="#4d8cff" strokeWidth="1.5" />
      <path d="M582 173C600 171 622 174 640 180C672 190 698 203 714 217" fill="none" stroke="#4f86f0" strokeWidth="1.300" strokeDasharray="6 5" />
      <path d="M695 227h11l-1-4 13 7-12 6-1-4-10-1z" fill="#d88018" stroke="#9c560a" strokeWidth=".8" />

      <path d="M239 468l5-17" stroke="#2424b8" />
      <path d="M239 468l-14-8" stroke="#b11" />
      <path d="M239 468h-13" stroke="#0a0" />
      <path d="M246 447l-7 8 8 1z" fill="#1a1ab0" />
      <path d="M225 458l7 1-1 6-7-1z" fill="#a30d0d" />
      <ellipse cx="227" cy="468" rx="4" ry="4" fill="#0a8a12" />
      <g fontFamily="Lato, sans-serif" fontSize="9" fontWeight="700">
        <text x="217" y="461" fill="#e22">X</text>
        <text x="216" y="472" fill="#2e2">Y</text>
        <text x="244" y="446" fill="#33e">Z</text>
      </g>
    </Scene>
  )
}

const Cube = styled.svg`
  position: absolute;
  top: 35px;
  right: 10px;
`

const DocButtons = styled.div`
  position: absolute;
  top: 5px;
  right: 1px;
  display: flex;
  gap: 6px;

  button {
    display: flex;
    padding: 0;
    border: 0;
    background: none;
  }
`

const NavBar = styled.div`
  position: absolute;
  top: 88px;
  right: 1px;
  display: flex;
  flex-direction: column;
  align-items: center;
  width: 27px;
  height: 159px;
  padding: 2px 0;
  border: 1px solid #4d4d4d;
  border-radius: 4px;
  background: #868686;

  button {
    display: flex;
    align-items: center;
    justify-content: center;
    padding: 0;
    border: 0;
    background: none;
  }
  hr {
    width: 21px;
    margin: 2px 0;
    border: 0;
    border-top: 1px solid #666;
  }
`

const NavTool = styled.button`
  flex: none;
  height: ${p => p.$h || 19}px;
  align-self: ${p => (p.$end ? 'flex-end' : 'center')};
`

function Navigation() {
  return (
    <NavBar>
      <NavTool $h={9} $end aria-label="Close bar">
        <svg width="9" height="8" viewBox="0 0 9 8"><circle cx="4" cy="4" r="3" fill="none" stroke="#444" /><path d="M3 3l2 2M5 3L3 5" stroke="#444" /></svg>
      </NavTool>
      <NavTool $h={30} aria-label="Steering wheel">
        <svg width="18" height="18" viewBox="0 0 18 18">
          <path d="M9 1h8v8a8 8 0 1 1-8-8z" fill="#d6d6d6" stroke="#555" />
          <circle cx="9" cy="9" r="5" fill="#c3c3c3" stroke="#666" strokeWidth="1.5" />
        </svg>
      </NavTool>
      <Caret size={4} color="#555" />
      <hr />
      <NavTool $h={20} aria-label="Pan">
        <svg width="14" height="14" viewBox="0 0 16 16"><path d="M6 15L1 8l1-1 3 3L3 3l2-1 2 6V1h2v7l2-6 1 1-1 6 3-4 1 1-3 8v1z" fill="#d8d8d8" stroke="#555" strokeWidth=".8" /></svg>
      </NavTool>
      <NavTool aria-label="Zoom">
        <svg width="14" height="14" viewBox="0 0 16 16"><path d="M10 10l5 5" stroke="#ddd" strokeWidth="3" /><circle cx="7" cy="7" r="6" fill="#999" stroke="#ddd" strokeWidth="1.300" /><path d="M4 3h4l2 2v6H4z" fill="#ddd" stroke="#555" /></svg>
      </NavTool>
      <NavTool $h={8} aria-label="Zoom options"><Caret size={4} color="#555" /></NavTool>
      <NavTool aria-label="Orbit">
        <svg width="14" height="14" viewBox="0 0 16 16" fill="none" stroke="#555" strokeWidth="1.300"><ellipse cx="8" cy="8" rx="7" ry="3" /><ellipse cx="8" cy="8" rx="3" ry="7" /><path d="M6 8h4M8 6v4" stroke="#ddd" /></svg>
      </NavTool>
      <NavTool $h={8} aria-label="Orbit options"><Caret size={4} color="#555" /></NavTool>
      <NavTool $h={20} aria-label="Look at">
        <svg width="14" height="14" viewBox="0 0 16 16"><path d="M2 6h12v8H2z" fill="#777" stroke="#ddd" strokeWidth="1.500" /><path d="M5 8h6v4H5z" fill="#ddd" /><path d="M3 4l2-2h6l2 2M8 1v3" stroke="#ddd" fill="none" /></svg>
      </NavTool>
      <NavTool $h={14} $end aria-label="Bar options">
        <svg width="9" height="8" viewBox="0 0 9 8"><circle cx="4" cy="4" r="3" fill="none" stroke="#444" /><path d="M3 4h2" stroke="#444" /></svg>
      </NavTool>
    </NavBar>
  )
}

const MiniBars = styled.div`
  position: absolute;
  top: 7px;
  left: 416px;
  display: grid;
  grid-template-columns: auto auto;
  justify-content: start;
  gap: 7px 7px;
`

const Pill = styled.div`
  display: flex;
  height: 17px;
  grid-column: ${p => (p.$wide ? '1 / 3' : 'auto')};
  justify-self: start;
  border: 1px solid #bbb;
  border-radius: 9px;
  overflow: hidden;
  background: linear-gradient(#b9b9b9, #919191);
`

const PillButton = styled.button`
  display: flex;
  align-items: center;
  justify-content: center;
  gap: 2px;
  width: ${p => p.$w}px;
  padding: 0;
  border: 0;
  border-right: 1px solid #5e5e5e;
  font-size: 9px;
  white-space: nowrap;
  background: none;
  color: #111;

  &:last-child {
    border-right: 0;
  }
`

const RadiusField = styled.label`
  display: flex;
  align-items: center;
  gap: 3px;
  padding-left: 6px;
  font-size: 9px;

  input {
    width: 72px;
    height: 13px;
    padding: 0 2px;
    border: 1px solid #8ab4e0;
    outline: none;
    background: #fff;
  }
  input::selection {
    background: #3399ff;
    color: #fff;
  }
`

function MiniToolbars() {
  const radius = useRef(null)

  useEffect(() => {
    radius.current.focus()
    radius.current.select()
  }, [])

  return (
    <MiniBars>
      <Pill>
        <PillButton $w={31} aria-label="Selection type"><Icon name="bodyMini" size={13} /><Caret size={7} /></PillButton>
        <PillButton $w={22} aria-label="Add set"><Icon name="addMini" size={13} /></PillButton>
        <PillButton $w={12} aria-label="Set options"><Caret size={7} /></PillButton>
      </Pill>
      <Pill>
        <RadiusField>
          R:
          <input ref={radius} defaultValue="5 in" />
        </RadiusField>
        <PillButton $w={14} aria-label="Radius options">
          <svg width="6" height="8" viewBox="0 0 6 8"><path d="M1 0l5 4-5 4z" fill="#333" /></svg>
        </PillButton>
      </Pill>
      <Pill $wide>
        <PillButton $w={69}><Icon name="cursor" size={12} />&nbsp;&nbsp;1 Selected</PillButton>
        <PillButton $w={14} aria-label="Selection list"><Caret size={7} /></PillButton>
        <PillButton $w={32} aria-label="Fillet type"><Icon name="edgesMini" size={13} /><Caret size={7} /></PillButton>
        <PillButton $w={30} aria-label="Edge mode"><Icon name="lineMini" size={13} /><Caret size={7} /></PillButton>
      </Pill>
    </MiniBars>
  )
}

const DocBar = styled.div`
  flex: none;
  display: flex;
  height: 18px;
  border-top: 2px solid #e4e4e4;
  background: linear-gradient(#a5a5a5, #c4c4c4);
`

const DocTool = styled.button`
  display: flex;
  align-items: center;
  justify-content: center;
  width: ${p => p.$w || 16}px;
  height: 15px;
  padding: 0;
  border: 1px solid #666;
  border-left-width: 0;
  background: #dedede;
`

const DocTab = styled.button`
  display: flex;
  align-items: center;
  gap: 4px;
  height: 15px;
  padding: 0 6px;
  border: 1px solid #666;
  border-width: 0 1px 1px 0;
  border-radius: 0 0 4px 4px;
  white-space: nowrap;
  background: ${p => (p.$active ? '#fdfdfd' : '#b7b7b7')};
`

const StatusBar = styled.footer`
  flex: none;
  display: flex;
  align-items: center;
  height: 15px;
  padding: 1px 20px 0 2px;
  border-top: 1px solid #999;
  background: linear-gradient(#f5f5f5, #b9b9b9);

  span:first-child {
    flex: 1;
  }
  span + span {
    margin-left: 26px;
  }
`

/* ---------- fillet dialog ---------- */

const Dialog = styled.section`
  position: absolute;
  top: 158px;
  left: 42px;
  display: flex;
  flex-direction: column;
  width: 389px;
  height: 266px;
  padding: 0 5px 6px;
  border: 1px solid #333;
  border-radius: 6px;
  font-size: 9px;
  line-height: 12px;
  color: #111;
  background: rgba(120, 120, 120, 0.2);
  backdrop-filter: blur(2px);
  box-shadow: inset 0 0 0 1px rgba(255, 255, 255, 0.35), 1px 2px 6px rgba(0, 0, 0, 0.6);
`

const DialogTitle = styled.header`
  flex: none;
  display: flex;
  justify-content: space-between;
  height: 23px;

  h2 {
    margin: 0;
    padding: 5px 0;
    font-size: 9px;
    font-weight: 400;
    text-shadow: 0 0 5px #fff, 0 0 5px #fff;
  }
`

const CloseButton = styled.button`
  display: flex;
  align-items: center;
  justify-content: center;
  width: 39px;
  height: 16px;
  padding: 0;
  border: 1px solid #8d8d8d;
  border-top: 0;
  border-radius: 0 0 4px 4px;
  background: rgba(90, 90, 90, 0.3);
`

const Client = styled.div`
  flex: 1;
  display: flex;
  flex-direction: column;
  border: 1px solid #777;
  background: #f0f0f0;
`

const Work = styled.div`
  display: grid;
  grid-template-columns: 20px 1fr;
  gap: 7px;
  padding: 4px 10px 0 7px;
`

const ModeList = styled.div`
  display: flex;
  flex-direction: column;
  gap: 1px;
  padding-top: 4px;
`

const ModeButton = styled.button`
  display: flex;
  align-items: center;
  justify-content: center;
  width: 20px;
  height: 20px;
  padding: 0;
  border: 1px solid ${p => (p.$on ? '#2f6fa8' : '#b5b5b5')};
  background: ${p => (p.$on ? 'linear-gradient(#6fb3e2, #b6ddf6)' : '#f0f0f0')};
`

const DialogTabs = styled.div`
  display: flex;
  align-items: flex-end;
  height: 18px;
`

const DialogTab = styled.button`
  position: relative;
  display: flex;
  align-items: center;
  gap: 4px;
  height: ${p => (p.$active ? 19 : 16)}px;
  margin-bottom: ${p => (p.$active ? -1 : 0)}px;
  padding: 0 ${p => (p.$active ? 6 : 4)}px 0 ${p => (p.$active ? 5 : 3)}px;
  border: 1px solid #8f8f96;
  border-bottom: 0;
  border-left-width: ${p => (p.$active ? 1 : 0)}px;
  white-space: nowrap;
  background: ${p => (p.$active ? '#fff' : 'linear-gradient(#f1f1f1, #d8d8d8)')};
`

const TabPanel = styled.div`
  display: grid;
  grid-template-columns: 191px 1fr;
  gap: 5px;
  height: 167px;
  padding: 5px 4px 8px 6px;
  border: 1px solid #9a9aa4;
  background: #fff;
`

const EdgeList = styled.div`
  border: 1px solid #828790;
`

const EdgeTable = styled.table`
  width: 100%;
  table-layout: fixed;
  border-collapse: collapse;

  th {
    height: 20px;
    padding: 0 4px;
    border-right: 1px solid #e0e3e8;
    border-bottom: 1px solid #d5d8de;
    font-weight: 400;
    text-align: left;
    background: linear-gradient(#fff, #f1f2f4);
  }
  td {
    height: 14px;
    padding: 0 4px;
  }
  td:first-child {
    padding: 0 0 0 1px;
  }
`

const Selected = styled.td`
  color: #3a94ec;
`

const Hint = styled.td`
  text-align: center;
  color: #777;
`

const TypeCell = styled.div`
  display: flex;
  align-items: center;
  justify-content: flex-end;
  gap: 4px;
  margin: 0 -1px;

  button {
    display: flex;
    align-items: center;
    justify-content: center;
    width: 12px;
    height: 12px;
    padding: 0;
    border: 1px solid #eee;
    border-color: #eee #666 #666 #eee;
    background: #cfccc6;
  }
`

const Side = styled.div`
  display: flex;
  flex-direction: column;
  gap: 15px;
`

const Group = styled.fieldset`
  display: flex;
  flex-direction: column;
  height: ${p => p.$h}px;
  margin: 0;
  padding: 0 5px;
  border: 1px solid #d8e0ea;
  border-radius: 3px;

  legend {
    height: 10px;
    padding: 0 1px;
    line-height: 10px;
  }
`

const Choice = styled.label`
  display: flex;
  align-items: center;
  gap: 2px;
  height: 18px;

  input {
    appearance: none;
    flex: none;
    width: 10px;
    height: 10px;
    border: 1px solid #8e8f8f;
    background: linear-gradient(135deg, #ccc, #fff);
  }
  input[type='radio'] {
    border-radius: 50%;
  }
  input[type='radio']:checked {
    background: radial-gradient(circle at 45% 40%, #4fc3f0, #124a70 40%, #e8e8e8 55%);
  }
`

const SolidsRow = styled.div`
  display: flex;
  align-items: center;
  gap: 10px;
  height: 27px;
`

const Actions = styled.footer`
  display: flex;
  align-items: center;
  gap: 3px;
  height: 30px;
  margin-top: 6px;
  padding: 0 18px 0 7px;
`

const PushButton = styled.button`
  display: flex;
  align-items: center;
  justify-content: center;
  width: ${p => p.$w}px;
  height: 18px;
  margin-left: ${p => (p.$push ? 'auto' : 0)};
  padding: 0;
  border: 1px solid #777;
  border-radius: 2px;
  background: linear-gradient(#f4f4f4, #e6e6e6 50%, #cfcfcf);
`

const Preview = styled.label`
  display: flex;
  align-items: center;
  gap: 4px;
  height: 20px;
  margin: 0 32px 0 25px;
  padding: 0 7px 0 4px;
  border: 1px solid #dde4ec;
  border-radius: 3px;

  input {
    appearance: none;
    width: 11px;
    height: 11px;
    border: 1px solid #8e8f8f;
    background: linear-gradient(135deg, #ccc, #fff);
  }
  svg:first-of-type {
    margin-left: -14px;
  }
`

const Fold = styled.button`
  display: flex;
  align-items: center;
  justify-content: center;
  flex: 1;
  padding: 0;
  border: 0;
  border-top: 1px solid #777;
  background: linear-gradient(#fff, #d9d9d9);
`

function FilletDialog() {
  return (
    <Dialog role="dialog" aria-label="Fillet">
      <DialogTitle>
        <h2>Fillet : Fillet3</h2>
        <CloseButton aria-label="Close dialog">
          <svg width="8" height="7" viewBox="0 0 8 7"><path d="M1 0l6 7M7 0L1 7" stroke="#fff" strokeWidth="2" /></svg>
        </CloseButton>
      </DialogTitle>
      <Client>
        <Work>
          <ModeList>
            <ModeButton $on aria-label="Edge fillet"><Icon name="fillet" size={15} /></ModeButton>
            <ModeButton aria-label="Face fillet"><Icon name="faceGrey" size={13} /></ModeButton>
            <ModeButton aria-label="Full round fillet"><Icon name="filletGrey" size={13} /></ModeButton>
          </ModeList>
          <div>
            <DialogTabs>
              <DialogTab $active><Icon name="fillet" size={13} />Constant</DialogTab>
              <DialogTab><Icon name="variable" size={13} />Variable</DialogTab>
              <DialogTab><Icon name="setbacks" size={13} />Setbacks</DialogTab>
            </DialogTabs>
            <TabPanel>
              <EdgeList>
                <EdgeTable>
                  <colgroup>
                    <col width="14" />
                    <col width="74" />
                    <col />
                    <col width="33" />
                  </colgroup>
                  <thead>
                    <tr>
                      <th aria-label="Pick" />
                      <th>Edges</th>
                      <th>Radius</th>
                      <th aria-label="Type" />
                    </tr>
                  </thead>
                  <tbody>
                    <tr>
                      <td><Icon name="cursor" size={12} /></td>
                      <Selected>1 Selected</Selected>
                      <td>5 in</td>
                      <td>
                        <TypeCell>
                          <Icon name="fillet" size={13} />
                          <button aria-label="Continuity"><Caret color="#111" /></button>
                        </TypeCell>
                      </td>
                    </tr>
                    <tr>
                      <Hint colSpan="4">Click to add</Hint>
                    </tr>
                  </tbody>
                </EdgeTable>
              </EdgeList>
              <Side>
                <Group $h={70}>
                  <legend>Select mode</legend>
                  <Choice><input type="radio" name="mode" defaultChecked />Edge</Choice>
                  <Choice><input type="radio" name="mode" />Loop</Choice>
                  <Choice><input type="radio" name="mode" />Feature</Choice>
                </Group>
                <Group $h={67}>
                  <SolidsRow>
                    <ModeButton aria-label="Pick solids"><Icon name="cursorGrey" size={13} /></ModeButton>
                    Solids
                  </SolidsRow>
                  <Choice><input type="checkbox" />All Fillets</Choice>
                  <Choice><input type="checkbox" />All Rounds</Choice>
                </Group>
              </Side>
            </TabPanel>
          </div>
        </Work>
        <Actions>
          <PushButton $w={18} aria-label="Help"><Icon name="helpBox" size={13} /></PushButton>
          <Preview>
            <input type="checkbox" defaultChecked aria-label="Preview" />
            <svg width="9" height="9" viewBox="0 0 9 9"><path d="M1 4l2 3 4-6" stroke="#2c4f9e" strokeWidth="1.800" fill="none" /></svg>
            <svg width="24" height="11" viewBox="0 0 24 11" fill="#bfe1e3" stroke="#222" strokeWidth="1.300">
              <path d="M2 5l2-4M19 5l3-4 1 3" fill="none" />
              <path d="M1 5h7v3c-1 3-6 3-7 0zM12 5h7v3c-1 3-6 3-7 0zM8 6h4" />
            </svg>
          </Preview>
          <PushButton $w={59}>OK</PushButton>
          <PushButton $w={59}>Cancel</PushButton>
          <PushButton $w={20} $push>&gt;&gt;</PushButton>
        </Actions>
        <Fold aria-label="Collapse dialog">
          <svg width="8" height="7" viewBox="0 0 8 7"><path d="M4 0l4 7H0z" fill="#111" /></svg>
        </Fold>
      </Client>
    </Dialog>
  )
}

export default function App() {
  return (
    <>
      <GlobalStyle />
      <Page>
        <Header>
          <AppButton aria-label="Application menu">
            <svg width="30" height="28" viewBox="0 0 30 28">
              <path d="M1 3l11-2v4l-2 1 2 11 4 1v3L4 24v-4l3-1L5 7 1 8z" fill="#f6b533" stroke="#a86508" />
              <path d="M6 5l3 14" stroke="#ffe19a" strokeWidth="1.500" />
              <path d="M22 12h6l-3 3z" fill="#222" />
            </svg>
            <AppLabel>PRO</AppLabel>
          </AppButton>
          <TitleTools />
          <Tabs>
            <Tab $active>Model</Tab>
            <Tab>Inspect</Tab>
            <Tab>Tools</Tab>
            <Tab>Manage</Tab>
            <Tab>View</Tab>
            <Tab>Environments</Tab>
            <Tab>Vault</Tab>
            <Tab>Get Started</Tab>
            <RibbonToggle aria-label="Ribbon display">
              <svg width="10" height="6" viewBox="0 0 10 6"><rect width="10" height="6" rx="1" fill="#eee" /><path d="M5 2l2 2H3z" fill="#222" /></svg>
              <Caret color="#ddd" size={4} />
            </RibbonToggle>
          </Tabs>
        </Header>
        <RibbonBar />
        <Main>
          <ModelBrowser />
          <Stage>
            <Viewport>
              <Model />
              <Cube width="46" height="42" viewBox="965 145 46 42">
                <path d="M973 146l37 11-5 23-22 4-17-12z" fill="#999" />
                <path d="M973 146l37 11-20 2z" fill="#a6a6a6" />
                <path d="M973 146l17 13-7 25-17-12z" fill="#a0a0a0" />
                <path d="M990 159l20-2-5 23-22 4z" fill="#8e8e8e" />
                <path d="M976 149l14 5 15 3M990 156l-7 25" stroke="#777" strokeDasharray="3 2" fill="none" />
                <text x="996" y="178" fontSize="6" fontWeight="700" fill="#555" transform="rotate(-72 996 178)">LEFT</text>
                <text x="974" y="173" fontSize="5" fontWeight="700" fill="#555" transform="rotate(-62 974 173)">BACK</text>
              </Cube>
              <DocButtons>
                <button aria-label="Minimize document"><svg width="10" height="9"><path d="M1 7h8" stroke="#eee" strokeWidth="2" /></svg></button>
                <button aria-label="Restore document"><svg width="10" height="9" viewBox="0 0 9 9"><path d="M3 1h5v5M1 3h5v5H1z" fill="none" stroke="#eee" strokeWidth="1.400" /></svg></button>
                <button aria-label="Close document"><svg width="10" height="9" viewBox="0 0 9 8"><path d="M1 0l7 8M8 0L1 8" stroke="#eee" strokeWidth="2" /></svg></button>
              </DocButtons>
              <Navigation />
              <MiniToolbars />
            </Viewport>
            <DocBar>
              <DocTool aria-label="Cascade"><Icon name="cascade" size={13} /></DocTool>
              <DocTool aria-label="Tile"><Icon name="tile" size={13} /></DocTool>
              <DocTool $w={15} aria-label="Tab list">
                <svg width="7" height="4" viewBox="0 0 7 4"><path d="M0 4h7L3 0z" fill="#111" /></svg>
              </DocTool>
              <DocTab>flower feeder.iam</DocTab>
              <DocTab>Part5</DocTab>
              <DocTab $active>
                ghost earings de...ipt
                <svg width="7" height="7" viewBox="0 0 7 7"><path d="M.5.5h6v6h-6zM1 1l5 5M6 1L1 6" fill="none" stroke="#666" /></svg>
              </DocTab>
            </DocBar>
          </Stage>
        </Main>
        <StatusBar>
          <span>Select an edge to fillet</span>
          <span>1</span>
          <span>5</span>
        </StatusBar>
      </Page>
      <FilletDialog />
    </>
  )
}
